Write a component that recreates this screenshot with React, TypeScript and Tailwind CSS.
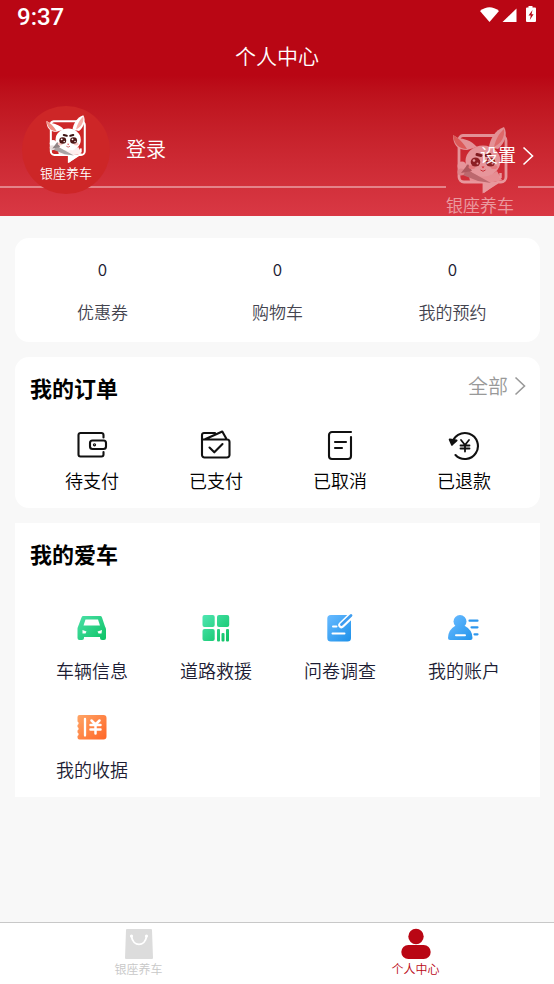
import type { ReactNode } from "react";

const fontStack = "font-['Noto_Sans_CJK_SC','Noto_Sans',sans-serif]";

function Mascot({ className }: { className: string }) {
  return (
    <svg viewBox="0 0 72 68" className={className} aria-hidden="true">
      <path
        d="M19 9.5H57a5 5 0 0 1 5 5V51a5 5 0 0 1-5 5H54L40 65V56H20a5 5 0 0 1-5-5V14a4.500 4.500 0 0 1 4-4.500Z"
        fill="none"
        stroke="#fff"
        strokeWidth="2.800"
      />
      <path d="M40 56H55L40 67Z" fill="#fff" />
      <path d="M24 46Q40 54 53 45L58 54Q50 57 42 56L26 55Z" fill="#fdeeee" />
      <path d="M9 9C9 18 13 24 23 24L33 21C27 14 20 13 14 12Z" fill="#fff" />
      <path d="M9 9C10 18 15 23 23 23C19 17 16 13 9 9Z" fill="#f08f83" />
      <path d="M60 1C51 4 46 13 45 21L54 23C61 17 64 8 60 1Z" fill="#fff" />
      <path d="M60 3C55 7 51 15 50 21C58 17 61 10 60 3Z" fill="#f6b0a8" />
      <ellipse cx="39" cy="35" rx="17.500" ry="15.500" fill="#fff" />
      <path d="M14 39L20 42L47 57L34 55L16 48Z" fill="#a9a3a4" />
      <circle cx="18" cy="40" r="4.500" fill="#fff" />
      <circle cx="17" cy="46" r="3.500" fill="#e8dedd" />
      <path d="M17 47L24 38L28 45Z" fill="#8f8586" />
      <ellipse cx="28" cy="41" rx="3.500" ry="2" fill="#fac9c6" />
      <ellipse cx="50" cy="41" rx="3.500" ry="2" fill="#fac9c6" />
      <ellipse cx="31.500" cy="36" rx="4.800" ry="4.500" fill="#4d1616" />
      <ellipse cx="46.500" cy="36" rx="4.800" ry="4.500" fill="#4d1616" />
      <circle cx="30" cy="34.500" r="1.300" fill="#fff" />
      <circle cx="45" cy="34.500" r="1.300" fill="#fff" />
      <circle cx="33.500" cy="37.500" r="1" fill="#fff" />
      <circle cx="48.500" cy="37.500" r="1" fill="#fff" />
      <path d="M33 28.500L37 29.500M46 28.500L42 29.500" stroke="#3a1010" strokeWidth="3" strokeLinecap="round" />
      <path d="M37.500 40.500H40.500L39 42.500Z" fill="#e0363c" />
      <path d="M36.500 44Q39 46.500 41.500 44" fill="none" stroke="#c0353a" strokeWidth="1" />
      <path d="M56.500 47V52" stroke="#fff" strokeWidth="2.500" />
    </svg>
  );
}

function Chevron({ className }: { className: string }) {
  return (
    <svg viewBox="0 0 12 20" className={className} fill="none" stroke="currentColor" aria-hidden="true">
      <path d="M1.500 1.500L10.500 10L1.500 18.500" strokeWidth="1.600" />
    </svg>
  );
}

function LineIcon({ children }: { children: ReactNode }) {
  return (
    <svg
      viewBox="0 0 32 32"
      className="size-8"
      fill="none"
      stroke="#111"
      strokeWidth="2.100"
      strokeLinecap="round"
      strokeLinejoin="round"
      aria-hidden="true"
    >
      {children}
    </svg>
  );
}

function ColorIcon({ id, from, to, children }: { id: string; from: string; to: string; children: ReactNode }) {
  return (
    <svg viewBox="0 0 32 32" className="size-8" aria-hidden="true">
      <defs>
        <linearGradient id={id} gradientUnits="userSpaceOnUse" x1="4" y1="4" x2="27" y2="28">
          <stop offset="0" stopColor={from} />
          <stop offset="1" stopColor={to} />
        </linearGradient>
      </defs>
      {children}
    </svg>
  );
}

const stats = [
  { label: "优惠券", value: 0 },
  { label: "购物车", value: 0 },
  { label: "我的预约", value: 0 },
];

const orders = [
  {
    label: "待支付",
    icon: (
      <LineIcon>
        <path d="M27.500 8.500V6a2 2 0 0 0-2-2H4.500a2 2 0 0 0-2 2V25.500a2 2 0 0 0 2 2H25.500a2 2 0 0 0 2-2V23" />
        <rect x="14" y="11.500" width="16" height="8.500" rx="2.500" />
        <circle cx="18.500" cy="15.800" r=".6" />
      </LineIcon>
    ),
  },
  {
    label: "已支付",
    icon: (
      <LineIcon>
        <path d="M2 11V6a2 2 0 0 1 2-2H15M2 10.500H27a2.500 2.500 0 0 1 2.500 2.500V26a2.500 2.500 0 0 1-2.500 2.500H4.500A2.500 2.500 0 0 1 2 26V7M5 10.300L22.300 2.500L26.500 10" />
        <path d="M9.500 18.500L14.300 23.300L22.500 15" />
      </LineIcon>
    ),
  },
  {
    label: "已取消",
    icon: (
      <LineIcon>
        <path d="M27 3H8a3 3 0 0 0-3 3V27a3 3 0 0 0 3 3H24a3 3 0 0 0 3-3V8M11 13H22M11 19H18" />
      </LineIcon>
    ),
  },
  {
    label: "已退款",
    icon: (
      <LineIcon>
        <path d="M4 15.500A13 13 0 1 1 7.500 26" />
        <path d="M1.800 10.500L4 15.500L8.500 11.500Z" fill="#111" />
        <path d="M13 11L17 16L21 11M17 16V22.500M12.500 16.500H21.500M12.500 19.500H21.500" strokeWidth="1.800" />
      </LineIcon>
    ),
  },
];

const services = [
  {
    label: "车辆信息",
    icon: (
      <ColorIcon id="car" from="#49dfa5" to="#10c468">
        <path
          d="M7.500 4H24a2 2 0 0 1 2 1.400L29 14.500a5 5 0 0 1 1 3V26a2 2 0 0 1-2 2H26a2 2 0 0 1-2-2V25H8v1a2 2 0 0 1-2 2H3.500a2 2 0 0 1-2-2V17.500a5 5 0 0 1 .6-3L5.500 5.400A2 2 0 0 1 7.500 4Z"
          fill="url(#car)"
        />
        <path d="M9.500 7.500H22L24 13.500H7.500Z" fill="#fff" />
        <path d="M6.500 18L10.500 19.500L9.500 21.500H6.500ZM26 18L21.500 19.500L22.500 21.500H25.500Z" fill="#fff" />
      </ColorIcon>
    ),
  },
  {
    label: "道路救援",
    icon: (
      <ColorIcon id="grid" from="#4ce4ae" to="#10c468">
        <g fill="url(#grid)">
          <rect x="2.500" y="3" width="12.200" height="12" rx="2" />
          <rect x="17" y="3" width="12.200" height="12" rx="2" />
          <rect x="2.500" y="17" width="12.200" height="12" rx="2" />
          <rect x="17" y="17" width="3" height="12.500" rx="1" />
          <rect x="21.500" y="21" width="3" height="8.500" rx="1" />
          <rect x="26" y="17" width="3" height="12.500" rx="1" />
        </g>
      </ColorIcon>
    ),
  },
  {
    label: "问卷调查",
    icon: (
      <ColorIcon id="survey" from="#66b9ff" to="#1f92ea">
        <rect x="3.300" y="3" width="23.700" height="26.500" rx="3.500" fill="url(#survey)" />
        <path d="M17.500 13L29 2" stroke="#fff" strokeWidth="6.500" strokeLinecap="round" />
        <path d="M17.500 12.500L27 3.500" stroke="#3e9df0" strokeWidth="2.800" strokeLinecap="round" />
        <path d="M9 14.500H12.500M8.500 21.500H20.500" stroke="#fff" strokeWidth="2" strokeLinecap="round" />
      </ColorIcon>
    ),
  },
  {
    label: "我的账户",
    icon: (
      <ColorIcon id="account" from="#66b9ff" to="#1f92ea">
        <g fill="url(#account)">
          <circle cx="12" cy="9.500" r="6.500" />
          <path d="M7 14H17Q24.500 18 24.500 26a2 2 0 0 1-2 2H2a2 2 0 0 1-2-2Q0 18 7 14Z" />
        </g>
        <path d="M8 23.200H17" stroke="#fff" strokeWidth="2" strokeLinecap="round" />
        <path d="M21.500 8.700H29.500M23.500 15.300H29.500M26.500 22.300H29.500" stroke="#2e97ee" strokeWidth="2.200" strokeLinecap="round" />
      </ColorIcon>
    ),
  },
  {
    label: "我的收据",
    icon: (
      <ColorIcon id="receipt" from="#ffa263" to="#ff6a2b">
        <path
          d="M3.500 4H27.500a3 3 0 0 1 3 3V25.500a3 3 0 0 1-3 3H3.500a2 2 0 0 1-2-2V25a2 2 0 0 0 0-3.600V19.500a2 2 0 0 0 0-3.600V14a2 2 0 0 0 0-3.600V6a2 2 0 0 1 2-2Z"
          fill="url(#receipt)"
        />
        <path d="M9 8V24.500" stroke="#fff" strokeWidth="2.300" strokeLinecap="round" />
        <path
          d="M15.500 9.500L19.500 13.500L23.500 9.500M19.500 13.500V22.500M14.500 14H24.500M14.500 18.500H24.500"
          stroke="#fff"
          strokeWidth="2.500"
          fill="none"
          strokeLinecap="round"
        />
      </ColorIcon>
    ),
  },
];

function StatusBar() {
  return (
    <div className="flex h-8 items-center justify-between pr-4 pl-[17px] text-white">
      <span className="pt-[2px] font-[Roboto] text-[24px] leading-8 font-medium">9:37</span>
      <svg viewBox="0 0 60 18" className="mb-1 h-[18px] w-[60px]" fill="#fff" aria-hidden="true">
        <path d="M2 6Q11.500-1.500 21 6L11.500 17Z" />
        <path d="M38.500 3.500V17H24.500Z" />
        <path d="M50.500 1h4V2.500h2.500a1 1 0 0 1 1 1V16a1 1 0 0 1-1 1H49a1 1 0 0 1-1-1V3.500a1 1 0 0 1 1-1h1.500Z" />
        <path d="M54.500 5L50.500 10.500H52.800L51.800 15L55.600 9.300H53.500Z" fill="#b90716" />
      </svg>
    </div>
  );
}

export default function App() {
  return (
    <div className={`flex min-h-screen flex-col bg-[#f8f8f8] font-[350] text-black ${fontStack}`}>
      <header className="relative h-[216px] bg-linear-to-b from-[#b90614] from-35% to-[#d93844]">
        <StatusBar />
        <h1 className="text-center text-[21px] leading-[46px] text-white">个人中心</h1>

        <div className="absolute inset-x-0 bottom-7 flex h-[2px] gap-[72px]">
          <span className="flex-1 bg-white/40" />
          <span className="w-9 bg-white/40" />
        </div>
        <div className="absolute right-[38px] bottom-0 flex w-[72px] flex-col items-center opacity-50">
          <Mascot className="h-[68px] w-[72px]" />
          <span className="text-[17px] leading-[22px] text-white">银座养车</span>
        </div>

        <div className="relative flex items-center pt-7 pr-5 pl-[22px] text-white">
          <div className="flex size-[88px] flex-col items-center rounded-full bg-[#cd2627] pt-2">
            <Mascot className="h-[50px] w-[52px]" />
            <span className="text-[13px] leading-[18px]">银座养车</span>
          </div>
          <button type="button" className="ml-4 pb-[2px] text-[20px] leading-8">
            登录
          </button>
          <button type="button" className="mt-2 ml-auto flex items-center gap-[6px] text-[18px] leading-8">
            设置
            <Chevron className="mt-1 h-5 w-3" />
          </button>
        </div>
      </header>

      <main className="flex flex-1 flex-col gap-[15px] pt-[22px] pr-[14px] pb-4 pl-[15px]">
        <section className="grid grid-cols-3 rounded-[14px] bg-white pt-[15px] pb-[17px]">
          {stats.map((s) => (
            <button type="button" key={s.label} className="flex flex-col items-center gap-[14px] text-[17px]">
              <span className="leading-8 text-[#1c1c33]">{s.value}</span>
              <span className="leading-[26px] text-[#44444f]">{s.label}</span>
            </button>
          ))}
        </section>

        <section className="rounded-[14px] bg-white pt-[14px] pr-[14px] pb-3 pl-[15px]">
          <div className="flex items-center justify-between">
            <h2 className="text-[22px] leading-8 font-bold">我的订单</h2>
            <button type="button" className="flex items-center gap-[6px] pb-[2px] text-[20px] leading-7 text-[#999]">
              全部
              <Chevron className="h-5 w-3" />
            </button>
          </div>
          <div className="mt-[26px] grid grid-cols-4">
            {orders.map((o) => (
              <button type="button" key={o.label} className="flex flex-col items-center gap-[3px] text-[18px] leading-8">
                {o.icon}
                {o.label}
              </button>
            ))}
          </div>
        </section>

        <section className="bg-white pt-[14px] pr-[14px] pb-3 pl-[15px]">
          <h2 className="text-[22px] leading-8 font-bold">我的爱车</h2>
          <div className="mt-[43px] grid grid-cols-4 gap-y-[25px]">
            {services.map((s) => (
              <button
                type="button"
                key={s.label}
                className="flex flex-col items-center gap-[10px] text-[18px] leading-8 text-[#1c1c33]"
              >
                {s.icon}
                {s.label}
              </button>
            ))}
          </div>
        </section>
      </main>

      <nav className="grid grid-cols-2 border-t border-[#c8c8c8] bg-white pt-[5px] pb-[6px] text-[12px] leading-[18px]">
        <a href="#home" className="flex flex-col items-center text-[#c8c8c8]">
          <svg viewBox="0 0 32 32" className="size-8" aria-hidden="true">
            <path d="M4 1H28a1 1 0 0 1 1 1L30 30a1 1 0 0 1-1 1H3a1 1 0 0 1-1-1L3 2a1 1 0 0 1 1-1Z" fill="#dcdcdc" />
            <path d="M8.500 8.500C10 19 22 19 23.500 8.500" fill="none" stroke="#fff" strokeWidth="1.800" />
            <circle cx="8.500" cy="8" r="1.600" fill="#fff" />
            <circle cx="23.500" cy="8" r="1.600" fill="#fff" />
          </svg>
          银座养车
        </a>
        <a href="#me" aria-current="page" className="flex flex-col items-center text-[#b90614]">
          <svg viewBox="0 0 32 32" className="size-8" fill="#b90614" aria-hidden="true">
            <circle cx="16" cy="8.500" r="7.700" />
            <rect x="1.300" y="17" width="29.400" height="14" rx="7" />
          </svg>
          个人中心
        </a>
      </nav>
    </div>
  );
}
